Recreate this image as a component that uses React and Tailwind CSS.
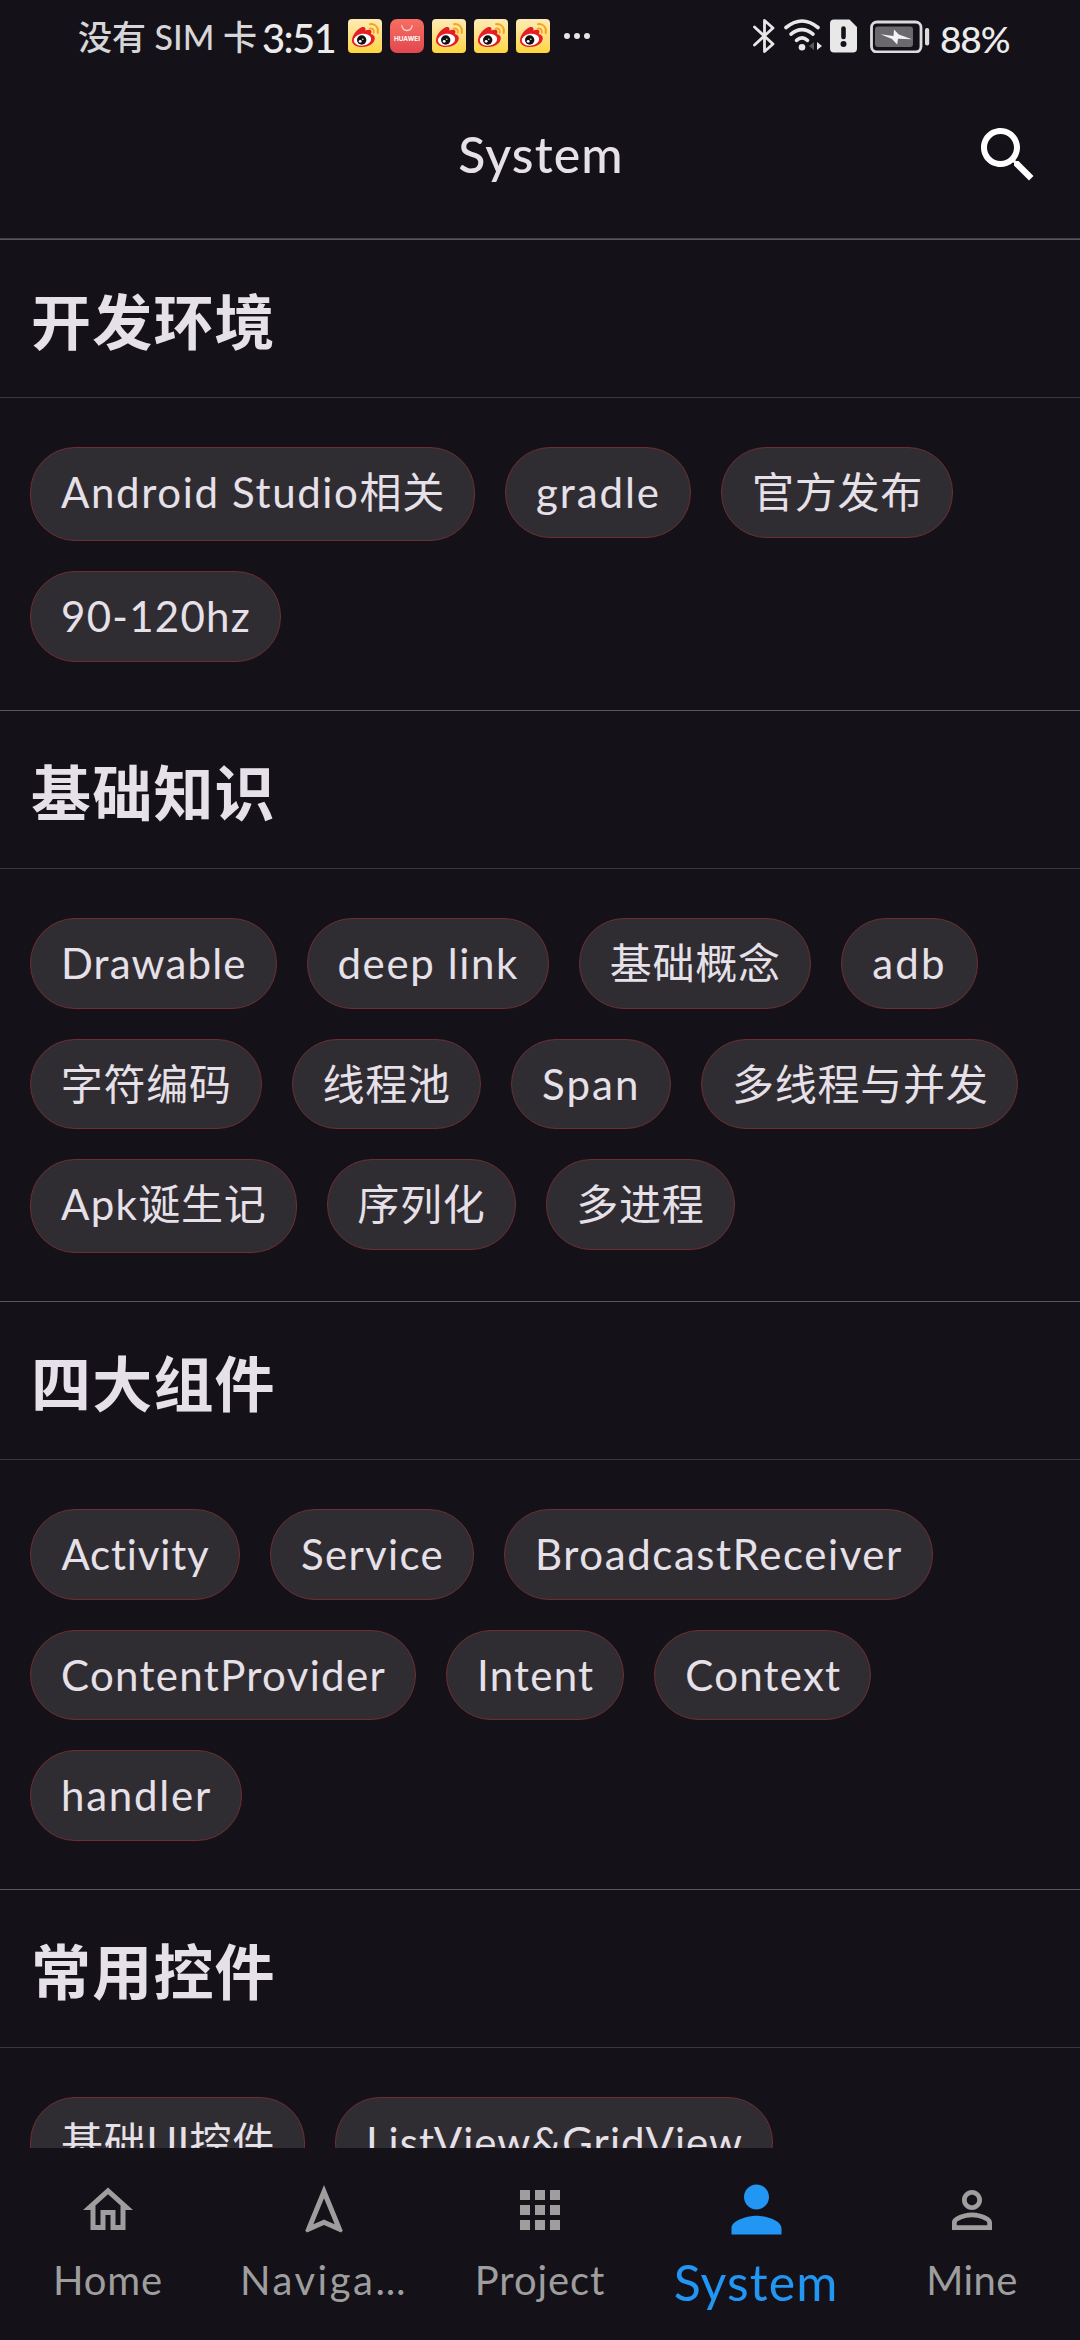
import React from "react";

const SECTIONS = [
  {
    title: "开发环境",
    size: "h-[471px]",
    chips: [
      { w: "w-[445px]", h: "h-[94px]", parts: [["Android Studio", "tracking-[1.64px]"], ["相关"]] },
      { w: "w-[186px]", parts: [["gradle", "tracking-[1.95px]"]] },
      { w: "w-[232px]", parts: [["官方发布"]] },
      { w: "w-[251px]", parts: [["90-120hz", "tracking-[1.27px]"]] },
    ],
  },
  {
    title: "基础知识",
    size: "h-[591px]",
    chips: [
      { w: "w-[246.5px]", parts: [["Drawable", "tracking-[1.14px]"]] },
      { w: "w-[242.5px]", parts: [["deep link", "tracking-[1.62px]"]] },
      { w: "w-[231.5px]", parts: [["基础概念"]] },
      { w: "w-[137px]", parts: [["adb", "tracking-[2.2px]"]] },
      { w: "w-[231.7px]", parts: [["字符编码"]] },
      { w: "w-[189px]", parts: [["线程池"]] },
      { w: "w-[160.3px]", parts: [["Span", "tracking-[2.1px]"]] },
      { w: "w-[317.5px]", parts: [["多线程与并发"]] },
      { w: "w-[266.5px]", h: "h-[94px]", parts: [["Apk", "tracking-[1.35px]"], ["诞生记"]] },
      { w: "w-[189px]", parts: [["序列化"]] },
      { w: "w-[189px]", parts: [["多进程"]] },
    ],
  },
  {
    title: "四大组件",
    size: "h-[588px]",
    chips: [
      { w: "w-[210px]", parts: [["Activity", "tracking-[0.84px]"]] },
      { w: "w-[204px]", parts: [["Service", "tracking-[1.33px]"]] },
      { w: "w-[429px]", parts: [["BroadcastReceiver", "tracking-[1.58px]"]] },
      { w: "w-[386px]", parts: [["ContentProvider", "tracking-[1.33px]"]] },
      { w: "w-[178.3px]", parts: [["Intent", "tracking-[1.23px]"]] },
      { w: "w-[217px]", parts: [["Context", "tracking-[1.23px]"]] },
      { w: "w-[212px]", parts: [["handler", "tracking-[1.77px]"]] },
    ],
  },
  {
    title: "常用控件",
    size: "h-[471px]",
    chips: [
      { w: "w-[275px]", h: "h-[94px]", parts: [["基础"], ["UI", "tracking-[0.15px]"], ["控件"]] },
      { w: "w-[438px]", parts: [["ListView&GridView", "tracking-[1.02px]"]] },
    ],
  },
];

const TABS = [
  {
    label: "Home",
    tracking: "tracking-[0.8px]",
    d: "M12 5.69l5 4.5V18h-2v-6H9v6H7v-7.81l5-4.5M12 3L2 12h3v8h6v-6h2v6h6v-8h3L12 3z",
  },
  {
    label: "Naviga…",
    tracking: "tracking-[2.5px]",
    d: "M12 7.27l4.28 10.43-3.47-1.53-.81-.36-.81.36-3.47 1.53L12 7.27M12 2L4.5 20.29l.71.71L12 18l6.79 3 .71-.71L12 2z",
  },
  {
    label: "Project",
    tracking: "tracking-[0.9px]",
    d: "M4 8h4V4H4v4zm6 12h4v-4h-4v4zm-6 0h4v-4H4v4zm0-6h4v-4H4v4zm6 0h4v-4h-4v4zm6-10v4h4V4h-4zm-6 4h4V4h-4v4zm6 6h4v-4h-4v4zm0 6h4v-4h-4v4z",
  },
  {
    label: "System",
    active: true,
    tracking: "tracking-[1.1px]",
    d: "M12 12c2.21 0 4-1.79 4-4s-1.79-4-4-4-4 1.79-4 4 1.79 4 4 4zm0 2c-2.67 0-8 1.34-8 4v2h16v-2c0-2.66-5.33-4-8-4z",
  },
  {
    label: "Mine",
    tracking: "tracking-[0.4px]",
    d: "M12 5.9c1.16 0 2.1.94 2.1 2.1s-.94 2.1-2.1 2.1S9.9 9.16 9.9 8s.94-2.1 2.1-2.1m0 9c2.97 0 6.1 1.46 6.1 2.1v1.1H5.9V17c0-.64 3.13-2.1 6.1-2.1M12 4C9.79 4 8 5.79 8 8s1.79 4 4 4 4-1.79 4-4-1.79-4-4-4zm0 9c-2.67 0-8 1.34-8 4v3h16v-3c0-2.66-5.33-4-8-4z",
  },
];

function WeiboIcon() {
  return (
    <div className="size-[34px] overflow-hidden rounded-[4px] bg-linear-to-b from-[#fdebb4] to-[#ffd437]">
      <svg viewBox="0 0 34 34" className="size-full">
        <path
          d="M4 21.5C4 16 9.5 9.5 14.5 8c2.5-.5 3.5 1 2.8 3.4 2.5-1 5.5-1.2 6 .6.4 1-.1 2-.4 2.9 3 .8 4 2.6 3.9 4.6C26.5 24.5 20 28 14 28S4 25.5 4 21.5z"
          fill="#e81c23"
        />
        <ellipse cx="14.5" cy="20.7" rx="8.7" ry="5.9" fill="#fff" transform="rotate(-8 14.5 20.7)" />
        <circle cx="13.7" cy="21" r="4.7" fill="#111" />
        <circle cx="12.2" cy="22.3" r="1.4" fill="#fff" />
        <circle cx="14.8" cy="20.3" r=".7" fill="#fff" />
        <path d="M21.8 9.6c2.6-.6 4.6 1.5 3.9 4.2" fill="none" stroke="#f9a11b" strokeWidth="1.8" strokeLinecap="round" />
        <path d="M22 5.2c5.2-.9 9 3.4 7.700 8.900" fill="none" stroke="#f9a11b" strokeWidth="1.9" strokeLinecap="round" />
      </svg>
    </div>
  );
}

function HuaweiIcon() {
  return (
    <div className="size-[34px] overflow-hidden rounded-[7px] bg-linear-to-b from-[#f66e62] to-[#e2474f]">
      <svg viewBox="0 0 34 34" className="size-full">
        <path d="M11.8 6.3a5.2 5.2 0 0 0 10.4 0" fill="none" stroke="#fbd3cf" strokeWidth="1.3" />
        <text x="17" y="22" textAnchor="middle" textLength="26" lengthAdjust="spacingAndGlyphs" fontSize="6.5" fontWeight="700" fill="#fff" className="font-['Inter',sans-serif]">
          HUAWEI
        </text>
      </svg>
    </div>
  );
}

function StatusBar() {
  return (
    <div className="flex h-[72px] shrink-0 items-center pr-[71px] pl-[78px]">
      <div className="w-[184px] whitespace-pre pt-0.5 text-[34px] leading-none font-medium text-[#d6d5d7]">没有 SIM 卡</div>
      <div className="w-[86px] pt-1 text-[40px] leading-none font-medium tracking-[-1.7px] text-[#ebebeb]">3:51</div>
      <div className="flex gap-2">
        <WeiboIcon />
        <HuaweiIcon />
        <WeiboIcon />
        <WeiboIcon />
        <WeiboIcon />
      </div>
      <div className="ml-[14px] flex gap-[4.5px]">
        <span className="size-[5.5px] rounded-full bg-[#e6e6e6]" />
        <span className="size-[5.5px] rounded-full bg-[#e6e6e6]" />
        <span className="size-[5.5px] rounded-full bg-[#e6e6e6]" />
      </div>
      <div className="ml-auto flex items-center">
        <svg viewBox="0 0 22 34" className="mr-[9px] h-[34px] w-[22px]" fill="none" stroke="#e8e8e8" strokeWidth="2.8" strokeLinejoin="round" strokeLinecap="round">
          <path d="M1.5 8L20 25 11.5 32.5V1.5L20 9 1.5 26" />
        </svg>
        <svg viewBox="0 0 38 34" className="mr-[8px] h-[34px] w-[38px]" fill="none" stroke="#e8e8e8" strokeLinecap="round">
          <path d="M2 8.5Q18 -4.5 34 8.5" strokeWidth="3.6" />
          <path d="M7 15.2Q18 6 29 15.2" strokeWidth="3.6" />
          <path d="M12.500 21.3Q18 16.5 23.5 21.3" strokeWidth="3.6" />
          <circle cx="18" cy="28.3" r="3.3" fill="#e8e8e8" stroke="none" />
          <path d="M30 23v8l-5-4z" fill="#59575c" stroke="none" />
          <path d="M33 23v8l5-4z" fill="#e8e8e8" stroke="none" />
        </svg>
        <svg viewBox="0 0 27 34" className="mr-[13px] h-[34px] w-[27px]">
          <path d="M4 .5h15.5L27 8v21.5a4 4 0 0 1-4 4H4a4 4 0 0 1-4-4v-25a4 4 0 0 1 4-4z" fill="#e8e8e8" />
          <path d="M13.5 9.5v8.5" stroke="#151219" strokeWidth="4.6" strokeLinecap="round" />
          <circle cx="13.5" cy="25" r="3" fill="#151219" />
        </svg>
        <svg viewBox="0 0 60 34" className="mr-[10px] h-[34px] w-[60px]">
          <rect x="1.5" y="3" width="49.5" height="30" rx="5.5" fill="none" stroke="#dcdcdc" strokeWidth="2.8" />
          <rect x="5" y="7.5" width="38" height="20.5" rx="3" fill="#6b696d" />
          <path d="M10.5 15.2L23.500 17l.5-6.5 4.8 5 13.2 4.8-14-.5-.8 5.7-5.2-5.5z" fill="#f2f2f2" />
          <rect x="55" y="9" width="4.2" height="17.5" rx="2" fill="#dcdcdc" />
        </svg>
        <span className="w-[69px] pt-1 text-[37px] leading-none font-medium tracking-[-1.1px] text-[#ebebeb]">88%</span>
      </div>
    </div>
  );
}

function Header() {
  return (
    <header className="grid h-[167px] shrink-0 grid-cols-[1fr_auto_1fr] items-center border-b border-[#444147] pr-9 pl-9">
      <h1 className="col-start-2 pb-[3px] pl-[2px] text-[50px] leading-[60px] font-medium tracking-[1.1px]">System</h1>
      <svg viewBox="0 0 24 24" className="size-[72px] justify-self-end" fill="#fff">
        <path d="M15.5 14h-.79l-.28-.27C15.41 12.59 16 11.11 16 9.5 16 5.91 13.09 3 9.5 3S3 5.91 3 9.5 5.91 16 9.5 16c1.61 0 3.09-.59 4.23-1.57l.27.28v.79l5 4.99L20.49 19l-4.99-5zm-6 0C7.01 14 5 11.99 5 9.5S7.01 5 9.5 5 14 7.01 14 9.5 11.99 14 9.5 14z" />
      </svg>
    </header>
  );
}

function Chip({ w, h = "h-[90.7px]", parts }) {
  return (
    <div className={`${w} ${h} flex shrink-0 items-start justify-center rounded-[45px] border border-[#6f2d2f] bg-[#302d32]`}>
      <span className="pl-px text-[42px] leading-[89.5px] whitespace-pre">
        {parts.map(([text, tracking = "tracking-[0.75px]"]) => (
          <span key={text} className={tracking}>
            {text}
          </span>
        ))}
      </span>
    </div>
  );
}

function Section({ title, size, chips }) {
  return (
    <section className={`${size} shrink-0 border-t border-[#58565b]`}>
      <div className="flex h-[158px] items-center border-b border-[#3a373e] pt-[6px] pl-[31px]">
        <h2 className="text-[60px] leading-none font-bold tracking-[1.2px]">{title}</h2>
      </div>
      <div className="flex flex-wrap items-start gap-[30px] pt-[49px] pr-[30px] pl-[30px]">
        {chips.map((chip, i) => (
          <Chip key={i} {...chip} />
        ))}
      </div>
    </section>
  );
}

function Tab({ label, d, tracking, active }) {
  return (
    <div className={`flex flex-col items-center ${active ? "gap-[5px] pt-6 text-[#2196f3]" : "gap-4 pt-8 text-[#9e9e9e]"}`}>
      <svg viewBox="0 0 24 24" fill="currentColor" className={active ? "size-[75px]" : "size-[60px]"}>
        <path d={d} />
      </svg>
      <span className={`${tracking} ${active ? "text-[50px] leading-[60px]" : "text-[40px] leading-[48px]"}`}>{label}</span>
    </div>
  );
}

export default function App() {
  return (
    <div className="flex h-[2340px] w-[1080px] flex-col overflow-hidden bg-[#141118] font-['Lato','Noto_Sans_CJK_SC',sans-serif] text-[#e6e0e9]">
      <StatusBar />
      <Header />
      <main className="flex min-h-0 flex-1 flex-col overflow-hidden">
        {SECTIONS.map((section) => (
          <Section key={section.title} {...section} />
        ))}
      </main>
      <nav className="grid h-[192px] shrink-0 grid-cols-5">
        {TABS.map((tab) => (
          <Tab key={tab.label} {...tab} />
        ))}
      </nav>
    </div>
  );
}
